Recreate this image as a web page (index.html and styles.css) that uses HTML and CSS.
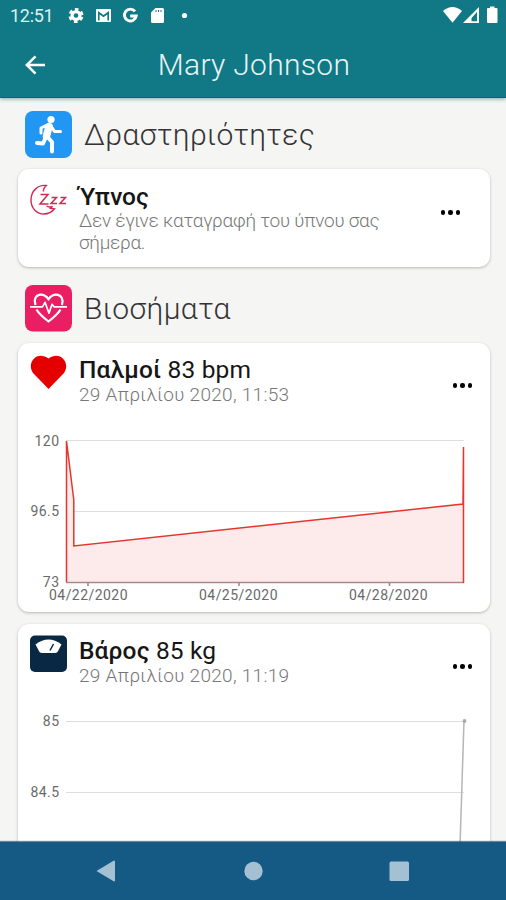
FILE: index.html
```
<!DOCTYPE html>
<html lang="el">

<head>
	<meta charset="UTF-8" />
	<title>Mary Johnson</title>
	<link rel="stylesheet" href="styles.css">
</head>

<body>
	<header class="header">
		<div class="status-bar">
			<span class="clock">12:51</span>
			<svg class="status-icons" width="126" height="20" viewBox="66 6 126 20" fill="#fff">
				<!-- settings -->
				<circle cx="76" cy="15.5" r="3.9" fill="none" stroke="#fff" stroke-width="3.2" />
				<circle cx="76" cy="15.5" r="6.1" fill="none" stroke="#fff" stroke-width="2.8" stroke-dasharray="3.5 2.888" stroke-dashoffset="-1.4" />
				<!-- mail -->
				<path fill-rule="evenodd" d="M97 9h13q1 0 1 1v11q0 1-1 1H97q-1 0-1-1V10q0-1 1-1zM98 11v9.5h1.6v-6l3.9 2.8 3.9-2.8v6h1.6V11l-5.5 4z" />
				<!-- google -->
				<path d="M135 11.4a5.9 5.9 0 1 0 1.2 4.6h-6" fill="none" stroke="#fff" stroke-width="2.9" />
				<!-- sd card -->
				<path fill-rule="evenodd" d="M155.5 8h7q1.5 0 1.5 1.5v12q0 1.5-1.5 1.5h-10q-1.5 0-1.5-1.5v-9zM155.5 10v2h1v-2zM158 10v2h1v-2zM160.5 10v2h1v-2z" />
				<circle cx="184.5" cy="15.5" r="2.6" />
			</svg>
			<svg class="signal-icons" width="56" height="20" viewBox="442 6 56 20" fill="#fff">
				<path d="M443 11q9.5-8 19 0l-9.5 11.8z" />
				<path fill-rule="evenodd" d="M479 7v16h-16zM477 12l-5.5 6v3.2h5.5z" />
				<path d="M490 6.5h4.5v1.5h2q1 0 1 1v13q0 1-1 1h-8.5q-1 0-1-1V9q0-1 1-1h2z" />
			</svg>
		</div>
		<div class="title-bar">
			<svg class="back" width="22" height="22" viewBox="0 0 22 22" fill="none" stroke="#fff" stroke-width="2.5">
				<path d="M21 11H3M11.5 2.3L2.8 11l8.7 8.7" />
			</svg>
			<h1 class="title">Mary Johnson</h1>
		</div>
	</header>

	<main class="content">
		<div class="section">
			<svg class="section-icon" width="47" height="47" viewBox="0 0 47 47">
				<rect width="47" height="47" rx="8" fill="#2196f3" />
				<circle cx="26" cy="8.5" r="3.6" fill="#fff" />
				<g fill="none" stroke="#fff" stroke-linecap="round" stroke-linejoin="round">
					<path d="M24 15.5L21.5 25" stroke-width="7.5" />
					<path d="M26 15l3.5 5.5h6M21 14.5l-5 2.5v5" stroke-width="3" />
					<path d="M22.5 26l4.5 5v9.5M20.5 27l-2.500 5.500-6-.5" stroke-width="4" />
				</g>
			</svg>
			<h2 class="section-title">Δραστηριότητες</h2>
		</div>

		<div class="card sleep-card">
			<svg class="card-icon" width="38" height="38" viewBox="30 183 38 38" fill="none" stroke="#cf2a53">
				<path d="M43.5 191.5c-.5-2 .8-4 2.800-6-8-.8-15.300 5-15.300 14.500 0 8.500 6 14 13 14 4.500 0 8-2 10.500-5.200l-4-.3 2-2.200c-2.500 1-4.500.7-6-.3" stroke-width="1.4" />
				<path d="M40.5 194.500h7.500l-8 9.500h8.500M51.500 197.500h5l-5.500 6h6M60.500 197.500h5l-5.500 6h6" stroke-width="1.5" />
			</svg>
			<div class="card-text">
				<div class="card-title"><b>Ύπνος</b></div>
				<div class="card-sub">Δεν έγινε καταγραφή του ύπνου σας σήμερα.</div>
			</div>
			<div class="more"><i></i><i></i><i></i></div>
		</div>

		<div class="section">
			<svg class="section-icon" width="47" height="47" viewBox="0 0 47 47">
				<rect width="47" height="46.5" rx="8" fill="#e91e63" />
				<g fill="none" stroke="#fff" stroke-linejoin="round">
					<path d="M10.5 20C6.5 8 20 7 23.5 14.500 27 7 40.500 8 37 20" stroke-width="2.200" />
					<path d="M11.5 24.5C14 29 19 33 23.500 36.500 28 33 33 29 35.500 24.500" stroke-width="2.200" />
					<path d="M5 21.800h12.500l2.500-4.500 4 11 3-9 2 2.500h13" stroke-width="1.700" />
				</g>
			</svg>
			<h2 class="section-title">Βιοσήματα</h2>
		</div>

		<div class="card chart-card">
			<div class="card-head">
				<svg class="card-icon" width="38" height="38" viewBox="0 0 38 38">
					<path d="M18.500 35L3 19C-4 9 7-4 18.500 4.500 30-4 41 9 34 19z" fill="#e50000" />
				</svg>
				<div class="card-text">
					<div class="card-title"><b>Παλμοί</b> 83 bpm</div>
					<div class="card-sub">29 Απριλίου 2020, 11:53</div>
				</div>
				<div class="more"><i></i><i></i><i></i></div>
			</div>
			<svg class="chart" width="472" height="190" viewBox="18 423 472 190">
				<path class="grid" d="M66 440.500h398M66 511.500h398" />
				<path d="M66 441l7.700 58v47L463.500 504v79H66z" fill="#fdeaea" />
				<path d="M66 582.500h398M88 582v4M239 582v4M389.500 582v4" stroke="#aa8688" stroke-width="1.600" />
				<path d="M66.500 582V441l7.300 59v46L463 504l.5-57v136" fill="none" stroke="#e4362f" stroke-width="1.500" />
				<g class="axis-y">
					<text x="59.500" y="445.500">120</text>
					<text x="59.500" y="516">96.5</text>
					<text x="59.500" y="587">73</text>
				</g>
				<g class="axis-x">
					<text x="88.500" y="599.500">04/22/2020</text>
					<text x="238.500" y="599.500">04/25/2020</text>
					<text x="388.500" y="599.500">04/28/2020</text>
				</g>
			</svg>
		</div>

		<div class="card chart-card">
			<div class="card-head">
				<svg class="card-icon" width="38" height="38" viewBox="0 0 38 38">
					<rect width="37" height="36.500" y=".5" rx="5" fill="#082843" />
					<path d="M5.500 9.500q13-10 26 0l-4 7.500q-1 1-2.500 1H12q-1.500 0-2.500-1z" fill="#fff" />
					<path d="M20 15.500l3.500-6.500" stroke="#082843" stroke-width="1.500" />
				</svg>
				<div class="card-text">
					<div class="card-title"><b>Βάρος</b> 85 kg</div>
					<div class="card-sub">29 Απριλίου 2020, 11:19</div>
				</div>
				<div class="more"><i></i><i></i><i></i></div>
			</div>
			<svg class="chart" width="472" height="190" viewBox="18 704 472 190">
				<path class="grid" d="M66 721.500h398M66 792.500h398" />
				<path d="M464 721l-4 125" stroke="#b5b5b5" stroke-width="1.500" />
				<circle cx="464.500" cy="721" r="1.900" fill="#aaa" />
				<g class="axis-y">
					<text x="59.500" y="726">85</text>
					<text x="59.500" y="796.500">84.5</text>
				</g>
			</svg>
		</div>
	</main>

	<nav class="nav-bar">
		<svg width="506" height="58" viewBox="0 842 506 58" fill="#a5c0d3">
			<path d="M96.500 871L114 860.500q1 0 1 1v19q0 1-1 1z" />
			<circle cx="253.500" cy="871" r="9.200" />
			<rect x="389.500" y="861.500" width="19.500" height="19.500" rx="1.500" />
		</svg>
	</nav>
</body>

</html>
```
FILE: styles.css
```
* { box-sizing: border-box; }

body {
	margin: 0; height: 900px; overflow: hidden;
	display: flex; flex-direction: column;
	font-family: Roboto, "Noto Sans", sans-serif;
	background: #f5f5f4; color: #161616;
}

h1, h2 { margin: 0; font-weight: 300; }
svg { display: block; flex: none; }

.header {
	height: 98px; flex: none;
	background: #107985; color: #fff;
	border-bottom: 1px solid #0c6771;
	box-shadow: 0 1px 4px rgba(0, 60, 70, 0.45);
}

.status-bar {
	display: flex; align-items: flex-start;
	height: 32px; padding: 6px 8px 0 10px;
}

.clock { width: 56px; font-size: 18px; line-height: 20px; letter-spacing: -0.3px; color: #dff0f2; }
.signal-icons { margin-left: auto; }

.title-bar {
	display: flex; align-items: center;
	height: 66px; padding: 0 24px;
}

.title {
	flex: 1; margin-right: 22px; padding-left: 2px;
	font-size: 30px; line-height: 36px; text-align: center;
	letter-spacing: 0.3px;
	color: #e8f4f5;
}

.content {
	flex: 1; min-height: 0; overflow: hidden;
	padding: 13px 16px 0 18px;
}

.section { display: flex; gap: 12px; padding-left: 7px; height: 47px; }
.section-title { font-size: 30px; line-height: 48px; letter-spacing: 0.42px; color: #333; }

.card {
	background: #fff; border-radius: 11px;
	box-shadow: 0 1px 3px rgba(0, 0, 0, 0.25);
}

.sleep-card {
	display: flex;
	height: 98px; margin: 11px 0 18px; padding: 14px 30px 0 12px;
}

.chart-card { height: 269px; margin: 11px 0 12px; }
.card-head { display: flex; height: 80px; padding: 11px 18px 0 12px; }
.card-icon { margin-right: 11px; }
.card-text { flex: 1; }
.card-title { font-size: 24.5px; line-height: 28px; white-space: nowrap; }
.card-title b { font-weight: 500; }
.card-sub { font-size: 19px; line-height: 22px; font-weight: 300; color: #777; }

.sleep-card .card-title { line-height: 27px; }
.sleep-card .card-sub { width: 320px; letter-spacing: -0.25px; }
.chart-card .card-text { padding: 2px 0 0; }
.chart-card .card-title { letter-spacing: 0.15px; }
.chart-card .card-sub { letter-spacing: 0.3px; }

.more { display: flex; gap: 3px; padding-top: 29px; }
.sleep-card .more { padding-top: 27px; }
.more i { width: 4.5px; height: 4.5px; border-radius: 50%; background: #000; }

.grid { stroke: #dedede; stroke-width: 1.2; }
.axis-y, .axis-x { font-size: 14px; fill: #6a6a6a; letter-spacing: 0.45px; }
.axis-y { text-anchor: end; }
.axis-x { text-anchor: middle; }

.nav-bar {
	height: 58px; flex: none;
	background: #145a85;
	box-shadow: 0 -1px 1px rgba(10, 60, 95, 0.6);
}
```
